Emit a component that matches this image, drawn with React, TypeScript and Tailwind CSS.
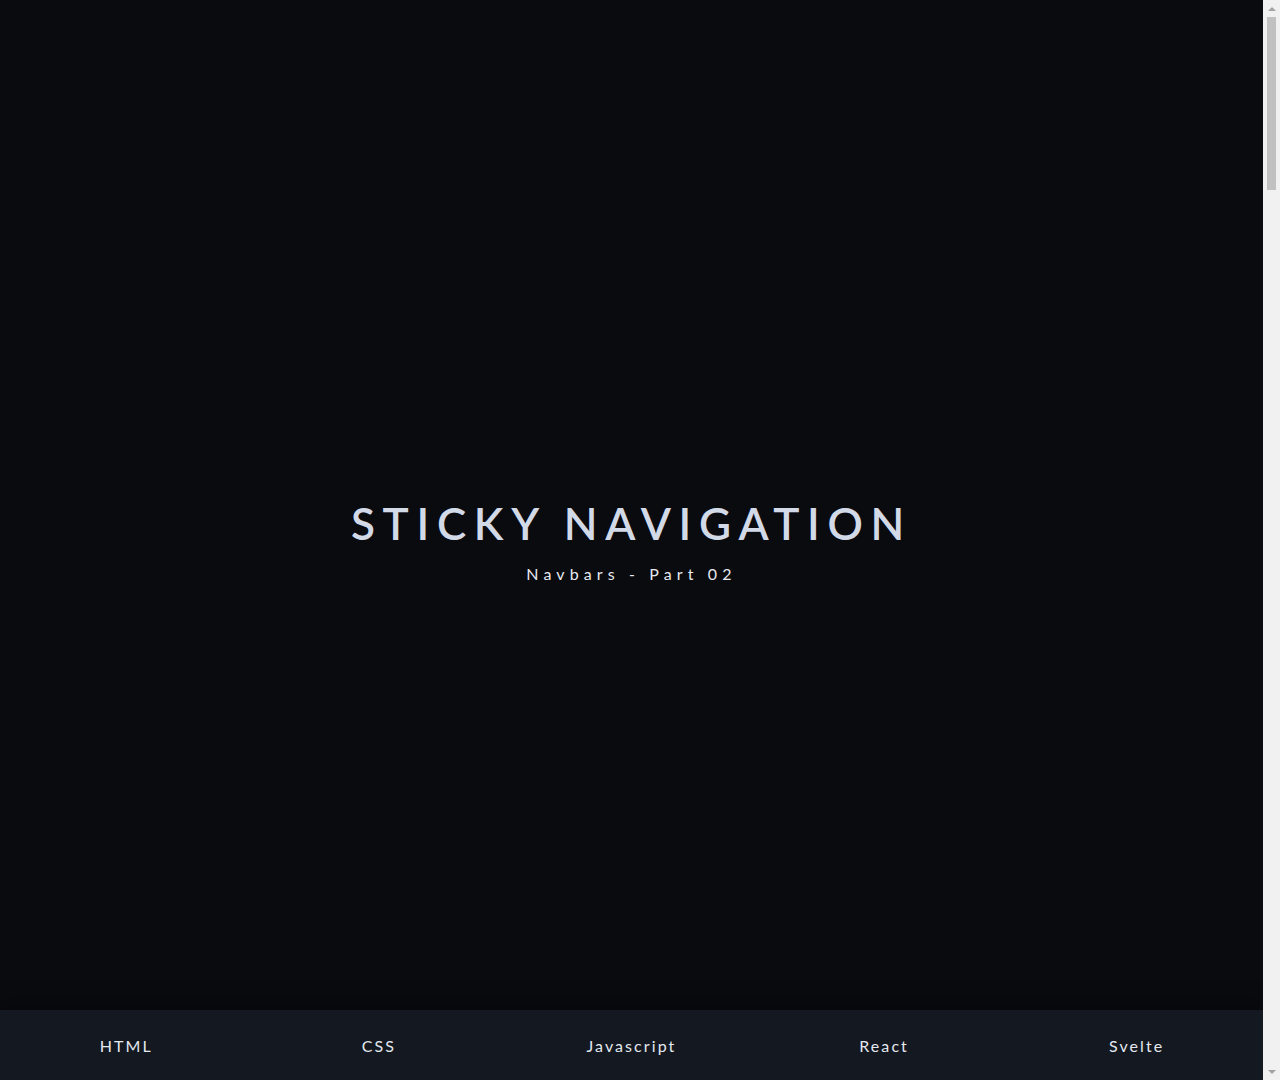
import React from "react";

const links = ["HTML", "CSS", "Javascript", "React", "Svelte"];

// classic browser scrollbar as it shows in the reference
const Scrollbar: React.FC = () => (
  <aside className="relative z-20 w-[17px] h-screen shrink-0 sticky top-0 self-start bg-[#f1f1f1] flex flex-col items-center">
    <div className="h-[17px] w-full flex items-center justify-center">
      <div className="w-0 h-0 border-l-[4px] border-r-[4px] border-b-[4px] border-l-transparent border-r-transparent border-b-[#a3a3a3]" />
    </div>
    <div className="w-[9px] h-[173px] bg-[#c1c1c1]" />
    <div className="flex-1" />
    <div className="h-[17px] w-full flex items-center justify-center">
      <div className="w-0 h-0 border-l-[4px] border-r-[4px] border-t-[4px] border-l-transparent border-r-transparent border-t-[#a3a3a3]" />
    </div>
  </aside>
);

const App: React.FC = () => {
  return (
    <div
      className="flex bg-[#0a0b0f] text-[#e2e6ee]"
      style={{ fontFamily: "Lato, 'Noto Sans', sans-serif" }}
    >
      <main className="flex-1 min-w-0">
        <div className="h-screen flex flex-col">
          <header className="flex-1 flex flex-col items-center justify-center pt-[73px]">
            <h1 className="text-[44px] leading-[1.2] font-semibold tracking-[0.175em] text-[#d2dae8]">
              STICKY NAVIGATION
            </h1>
            <p className="mt-[12px] text-[16px] tracking-[0.32em] text-[#e6e9ef]">
              Navbars - Part 02
            </p>
          </header>

          <nav className="sticky bottom-0 z-10 h-[70px] shrink-0 bg-[#131821] shadow-[0_-8px_20px_rgba(0,0,0,0.35)]">
            <ul className="flex h-full pt-[2px]">
              {links.map((link) => (
                <li
                  key={link}
                  className="flex-1 flex items-center justify-center"
                >
                  <a
                    href={`#${link.toLowerCase()}`}
                    className="text-[16px] tracking-[0.13em] text-[#e4e8ef] hover:text-white"
                  >
                    {link}
                  </a>
                </li>
              ))}
            </ul>
          </nav>
        </div>

        {links.map((link) => (
          <section
            key={link}
            id={link.toLowerCase()}
            className="h-screen flex items-center justify-center"
          >
            <h2 className="text-[40px] tracking-[0.2em] text-[#d2dae8]">
              {link}
            </h2>
          </section>
        ))}
      </main>
      <Scrollbar />
    </div>
  );
};

export default App;
